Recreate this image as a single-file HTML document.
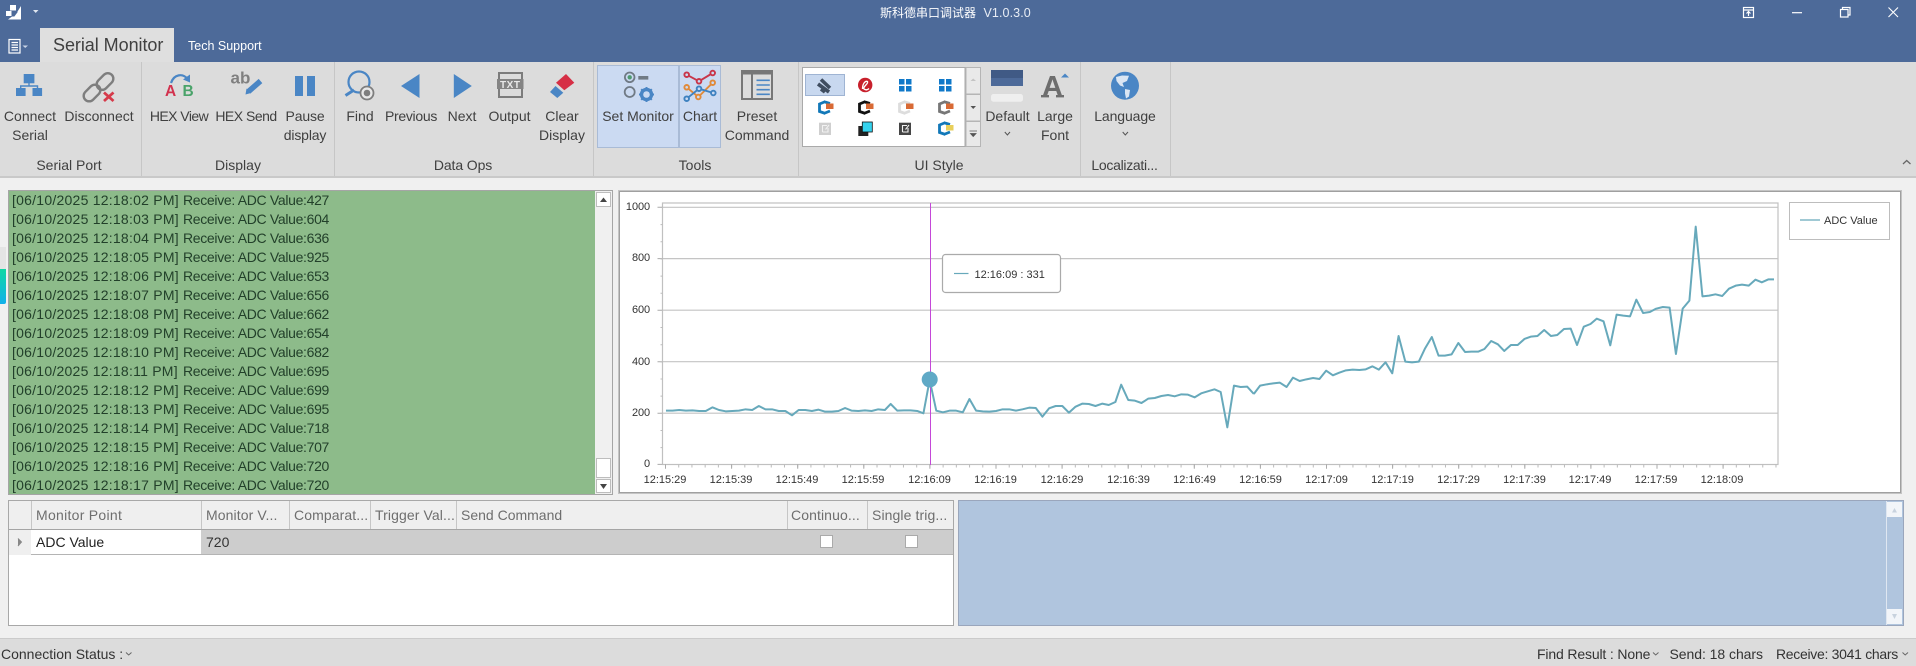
<!DOCTYPE html>
<html><head><meta charset="utf-8"><style>
html,body{margin:0;padding:0;width:1916px;height:666px;overflow:hidden;background:#f0f0f0}
body{position:relative;font-family:"Liberation Sans","Noto Sans CJK SC",sans-serif;font-size:14px;color:#404040}
div,span{position:absolute}
.c{transform:translateX(-50%);white-space:nowrap;line-height:18px;text-align:center}
.l{white-space:nowrap;line-height:18px}
.sb{background:#fff;border:1px solid #bdbdbd;box-sizing:border-box}
.h{top:502px;height:29px;line-height:27px;color:#6e6e6e;font-size:14px;white-space:nowrap;letter-spacing:.1px}
.v{top:501px;width:1px;height:28px;background:#c6c6c6}
.cb{top:535px;width:13px;height:13px;background:#fff;border:1px solid #aaa;box-sizing:border-box}
.y{right:1266px;font-size:11px;line-height:14px;color:#333;letter-spacing:-.1px}
.x{top:473px;font-size:11px;line-height:14px;color:#333;transform:translateX(-50%);white-space:nowrap}
</style></head><body>
<div style="left:0;top:0;width:1916px;height:62px;background:#4d6a99"></div>
<div style="left:40px;top:28px;width:134px;height:34px;background:#dfdfdf"></div>
<div class="l" style="left:53px;top:36px;font-size:18px;letter-spacing:-.05px;color:#404040">Serial Monitor</div>
<div class="l" style="left:188px;top:37px;font-size:12.5px;color:#fff">Tech Support</div>
<div class="l" style="left:880px;top:4px;font-size:12px;color:#fff">斯科德串口调试器</div>
<div class="l" style="left:983.5px;top:4px;font-size:12.5px;color:#e8edf5;letter-spacing:.1px">V1.0.3.0</div>

<div style="left:0;top:62px;width:1916px;height:114px;background:#dcdcdc;border-bottom:2px solid #c9c9c9"></div>
<div style="left:141px;top:62px;width:1px;height:114px;background:#c6c6c6"></div>
<div style="left:334px;top:62px;width:1px;height:114px;background:#c6c6c6"></div>
<div style="left:593px;top:62px;width:1px;height:114px;background:#c6c6c6"></div>
<div style="left:798px;top:62px;width:1px;height:114px;background:#c6c6c6"></div>
<div style="left:1080px;top:62px;width:1px;height:114px;background:#c6c6c6"></div>
<div style="left:1170px;top:62px;width:1px;height:114px;background:#c6c6c6"></div>

<div style="left:597px;top:65px;width:82px;height:83px;background:#cbdaf2;border:1px solid #a9bbd6;box-sizing:border-box"></div>
<div style="left:679px;top:65px;width:42px;height:83px;background:#cbdaf2;border:1px solid #a9bbd6;box-sizing:border-box"></div>

<div class="c" style="left:30px;top:107px">Connect</div><div class="c" style="left:30px;top:126px">Serial</div>
<div class="c" style="left:99px;top:107px">Disconnect</div>
<div class="c" style="left:179px;top:107px;letter-spacing:-.55px">HEX View</div>
<div class="c" style="left:246px;top:107px;letter-spacing:-.5px">HEX Send</div>
<div class="c" style="left:305px;top:107px;letter-spacing:-.15px">Pause</div><div class="c" style="left:305px;top:126px;letter-spacing:-.15px">display</div>
<div class="c" style="left:360px;top:107px">Find</div>
<div class="c" style="left:411px;top:107px;letter-spacing:-.3px">Previous</div>
<div class="c" style="left:462px;top:107px">Next</div>
<div class="c" style="left:509.5px;top:107px">Output</div>
<div class="c" style="left:562px;top:107px">Clear</div><div class="c" style="left:562px;top:126px">Display</div>
<div class="c" style="left:638px;top:107px">Set Monitor</div>
<div class="c" style="left:700px;top:107px">Chart</div>
<div class="c" style="left:757px;top:107px">Preset</div><div class="c" style="left:757px;top:126px">Command</div>
<div class="c" style="left:1007.5px;top:107px">Default</div>
<div class="c" style="left:1055px;top:107px">Large</div><div class="c" style="left:1055px;top:126px">Font</div>
<div class="c" style="left:1125px;top:107px;letter-spacing:-.1px">Language</div>

<div class="c" style="left:69px;top:156px">Serial Port</div>
<div class="c" style="left:238px;top:156px">Display</div>
<div class="c" style="left:463px;top:156px;letter-spacing:-.1px">Data Ops</div>
<div class="c" style="left:695px;top:156px">Tools</div>
<div class="c" style="left:939px;top:156px">UI Style</div>
<div class="c" style="left:1124.5px;top:156px;letter-spacing:-.3px">Localizati...</div>

<!-- left marker -->
<div style="left:0;top:247px;width:6px;height:22px;background:#e4e4e4"></div>
<div style="left:0;top:269px;width:6px;height:35px;background:linear-gradient(#10d8a4,#12b0ea);border-radius:0 0 2px 0"></div>

<!-- log -->
<div style="left:8px;top:190px;width:605px;height:305px;border:1px solid #a5a5a5;box-sizing:border-box;background:#f0f0f0"></div>
<div style="left:9px;top:191px;width:586px;height:303px;background:#8dbb8a"></div>
<div class="l" style="left:12px;top:190.5px;line-height:19px;color:#22402a;font-size:14px;letter-spacing:.24px">[06/10/2025 12:18:02 PM]<br>[06/10/2025 12:18:03 PM]<br>[06/10/2025 12:18:04 PM]<br>[06/10/2025 12:18:05 PM]<br>[06/10/2025 12:18:06 PM]<br>[06/10/2025 12:18:07 PM]<br>[06/10/2025 12:18:08 PM]<br>[06/10/2025 12:18:09 PM]<br>[06/10/2025 12:18:10 PM]<br>[06/10/2025 12:18:11 PM]<br>[06/10/2025 12:18:12 PM]<br>[06/10/2025 12:18:13 PM]<br>[06/10/2025 12:18:14 PM]<br>[06/10/2025 12:18:15 PM]<br>[06/10/2025 12:18:16 PM]<br>[06/10/2025 12:18:17 PM]</div>
<div class="l" style="left:183px;top:190.5px;line-height:19px;color:#22402a;font-size:14px;letter-spacing:-.32px">Receive: ADC Value:427<br>Receive: ADC Value:604<br>Receive: ADC Value:636<br>Receive: ADC Value:925<br>Receive: ADC Value:653<br>Receive: ADC Value:656<br>Receive: ADC Value:662<br>Receive: ADC Value:654<br>Receive: ADC Value:682<br>Receive: ADC Value:695<br>Receive: ADC Value:699<br>Receive: ADC Value:695<br>Receive: ADC Value:718<br>Receive: ADC Value:707<br>Receive: ADC Value:720<br>Receive: ADC Value:720</div>
<div class="sb" style="left:596px;top:192px;width:15px;height:15px"></div>
<div class="sb" style="left:596px;top:458px;width:15px;height:20px"></div>
<div class="sb" style="left:596px;top:479px;width:15px;height:14px"></div>

<!-- chart -->
<div style="left:618px;top:190px;width:1284px;height:304px;background:#fff;border:1px solid #c4c4c4;outline:1px solid #a0a0a0;outline-offset:-2px;box-sizing:border-box"></div>
<div class="y" style="top:200px">1000</div><div class="y" style="top:251px">800</div><div class="y" style="top:303px">600</div><div class="y" style="top:355px">400</div><div class="y" style="top:406px">200</div><div class="y" style="top:457px">0</div>
<div class="x" style="left:665px">12:15:29</div><div class="x" style="left:731px">12:15:39</div><div class="x" style="left:797px">12:15:49</div><div class="x" style="left:863px">12:15:59</div><div class="x" style="left:929.5px">12:16:09</div><div class="x" style="left:995.5px">12:16:19</div><div class="x" style="left:1062px">12:16:29</div><div class="x" style="left:1128.5px">12:16:39</div><div class="x" style="left:1194.5px">12:16:49</div><div class="x" style="left:1260.5px">12:16:59</div><div class="x" style="left:1326.5px">12:17:09</div><div class="x" style="left:1392.5px">12:17:19</div><div class="x" style="left:1458.5px">12:17:29</div><div class="x" style="left:1524.5px">12:17:39</div><div class="x" style="left:1590px">12:17:49</div><div class="x" style="left:1656px">12:17:59</div><div class="x" style="left:1722px">12:18:09</div>
<div style="left:1789px;top:202px;width:101px;height:38px;border:1px solid #bdbdbd;box-sizing:border-box"></div>
<div class="l" style="left:1824px;top:213.5px;font-size:11px;color:#333;line-height:15px">ADC Value</div>

<!-- table -->
<div style="left:8px;top:500px;width:946px;height:126px;background:#fff;border:1px solid #a8a8a8;box-sizing:border-box"></div>
<div style="left:9px;top:501px;width:944px;height:28px;background:#efefef;border-bottom:1px solid #a5a5a5"></div>
<div style="left:9px;top:530px;width:22px;height:25px;background:#efefef"></div>
<div style="left:201px;top:530px;width:752px;height:24px;background:#cdcdcd"></div>
<div style="left:31px;top:554px;width:922px;height:1px;background:#b4b4b4"></div>
<div class="v" style="left:31px"></div><div class="v" style="left:201px"></div><div class="v" style="left:289px"></div><div class="v" style="left:370px"></div><div class="v" style="left:456px"></div><div class="v" style="left:787px"></div><div class="v" style="left:867px"></div>
<div class="h" style="left:36px;letter-spacing:.28px">Monitor Point</div>
<div class="h" style="left:206px">Monitor V...</div>
<div class="h" style="left:294px">Comparat...</div>
<div class="h" style="left:375px">Trigger Val...</div>
<div class="h" style="left:461px;letter-spacing:0">Send Command</div>
<div class="h" style="left:791px">Continuo...</div>
<div class="h" style="left:872px">Single trig...</div>
<div class="l" style="left:36px;top:533px;font-size:14px;color:#222">ADC Value</div>
<div class="l" style="left:206px;top:533px;font-size:14px;color:#333">720</div>
<div class="cb" style="left:820px"></div><div class="cb" style="left:905px"></div>

<!-- blue panel -->
<div style="left:958px;top:500px;width:946px;height:126px;background:#b0c5de;border:1px solid #9aa6bc;box-sizing:border-box"></div>
<div style="left:1886px;top:501px;width:1px;height:124px;background:#dfe7f1"></div>
<div style="left:1887px;top:502px;width:15px;height:15px;background:#f2f5f9"></div>
<div style="left:1887px;top:609px;width:15px;height:15px;background:#f2f5f9"></div>

<!-- status -->
<div style="left:0;top:638px;width:1916px;height:28px;background:#dcdcdc;border-top:1px solid #cbcbcb;box-sizing:border-box"></div>
<div class="l" style="left:1px;top:645px;color:#333">Connection Status :</div>
<div class="l" style="left:1537px;top:645px;color:#333;letter-spacing:-.15px">Find Result : None</div>
<div class="l" style="left:1669.5px;top:645px;color:#333;letter-spacing:-.05px">Send: 18 chars</div>
<div class="l" style="left:1776px;top:645px;color:#333;letter-spacing:-.3px">Receive: 3041 chars</div>

<svg width="1916" height="666" viewBox="0 0 1916 666" style="position:absolute;left:0;top:0" font-family="Liberation Sans, sans-serif">
<!-- window controls -->
<g fill="none" stroke="#fff" stroke-width="1.2">
<rect x="1743.5" y="7.5" width="10" height="10"/><path d="M1743.5 10H1753.5M1748.5 16V11.5M1746.5 13.5L1748.5 11.5L1750.5 13.5"/>
<path d="M1792 12.7H1802"/>
<rect x="1840.5" y="9.5" width="7.5" height="7.5"/><path d="M1842.5 9.5V7.5H1850V15H1848"/>
<path d="M1888.5 7.5L1898 17M1898 7.5L1888.5 17" stroke-width="1.1"/>
</g>
<!-- app icon -->
<g fill="#fff"><rect x="10" y="5" width="6" height="5.5"/><rect x="6" y="11" width="5.5" height="5"/><path d="M21 6V19.5H8L12 16.5H17.5V11.5Z"/><path d="M18.5 11L19.3 18.2H13Z"/></g>
<path d="M33 10H38.5L35.7 13Z" fill="#dfe6f0"/>
<g fill="none" stroke="#fff" stroke-width="1.2"><rect x="9" y="39.5" width="11" height="13.5"/><path d="M11.5 42.5H18M11.5 45H18M11.5 47.5H18M11.5 50H18"/></g>
<path d="M22.5 45.5H28L25.2 48Z" fill="#c9d4e6"/>
<path d="M1903 164L1906.7 160.5L1910.5 164" fill="none" stroke="#666" stroke-width="1.3"/>

<!-- connect -->
<g fill="#4a86c5"><rect x="23.7" y="74" width="10.7" height="9.3"/><rect x="16" y="88" width="9.6" height="8"/><rect x="32.5" y="88" width="9.6" height="8"/></g>
<path d="M29 83V86H20.7V88M29 86H37.5V88" stroke="#4a86c5" stroke-width="1.4" fill="none"/>
<!-- disconnect -->
<g fill="none" stroke="#7e7e7e" stroke-width="2.4">
<rect x="95.5" y="76" width="19" height="11" rx="5.5" transform="rotate(-45 105 81.5)"/>
<rect x="82.5" y="87.5" width="19" height="11" rx="5.5" transform="rotate(-45 92 93)"/></g>
<path d="M104 92.5L113.5 101M113.5 92.5L104 101" stroke="#d63a4a" stroke-width="2.8" fill="none"/>
<!-- hex view -->
<text x="165" y="96" font-size="15.5" font-weight="700" fill="#d2324e">A</text>
<text x="182.5" y="96" font-size="15.5" font-weight="700" fill="#4aa36a">B</text>
<path d="M171 83C174 74 183 73 187.5 79" fill="none" stroke="#4a86c5" stroke-width="2.2"/>
<path d="M183 79.5L190 74.5L190 82.5Z" fill="#4a86c5"/>
<!-- hex send -->
<text x="230.5" y="83.5" font-size="17" font-weight="700" fill="#808080">ab</text>
<path d="M248.5 91.5L260.5 81" stroke="#4a86c5" stroke-width="5.5" fill="none"/><path d="M245.5 94.5L246.5 88.5L251 93Z" fill="#4a86c5"/>
<!-- pause -->
<rect x="295" y="76" width="8" height="20" fill="#4a86c5"/><rect x="307" y="76" width="8" height="20" fill="#4a86c5"/>
<!-- find -->
<circle cx="359" cy="82" r="10.5" fill="none" stroke="#4a86c5" stroke-width="2.2"/>
<path d="M354 90L345.5 95.5" stroke="#4a86c5" stroke-width="3"/>
<circle cx="367" cy="93" r="6.5" fill="#e8e8e8" stroke="#7e7e7e" stroke-width="1.8"/><circle cx="367" cy="93" r="3.3" fill="#7e7e7e"/>
<!-- prev/next -->
<path d="M401 86L419.5 74V98Z" fill="#4a86c5"/><path d="M453.8 74L471.8 86L453.8 98Z" fill="#4a86c5"/>
<!-- output -->
<rect x="499" y="73" width="23" height="24" fill="none" stroke="#7c7c7c" stroke-width="2"/>
<rect x="497" y="79" width="26.5" height="10" fill="#848484"/>
<text x="510.3" y="88" font-size="10" font-weight="700" fill="#e8e8e8" text-anchor="middle" letter-spacing=".6">TXT</text>
<!-- eraser -->
<path d="M556 82.7L566 74L574.3 82.7L564.3 90.3Z" fill="#d62f45"/>
<path d="M550 92L555.5 86L563.3 92.7L557.3 98Z" fill="#4a86c5"/>
<!-- set monitor -->
<circle cx="629.7" cy="77.3" r="4.8" fill="none" stroke="#707a85" stroke-width="1.8"/><circle cx="629.7" cy="77.3" r="2.2" fill="#4f9a70"/>
<rect x="638.3" y="76" width="10" height="3.6" fill="#707a85"/>
<circle cx="629.7" cy="92" r="5" fill="none" stroke="#707a85" stroke-width="1.8"/>
<path d="M646.5 87V102M639 94.5H654M641.2 89.2L651.8 99.8M651.8 89.2L641.2 99.8" stroke="#4a86c5" stroke-width="1.9"/>
<circle cx="646.5" cy="94.5" r="5" fill="#cbdaf2" stroke="#4a86c5" stroke-width="3.4"/>
<!-- chart icon -->
<g fill="none" stroke-width="1.9">
<path d="M686.7 74.7L699 81.3L712.7 73" stroke="#c8354a"/>
<path d="M686.7 87.3L698.3 97L712.7 82.7" stroke="#e08a3a"/>
<path d="M686.7 98.7L699 88.7L713.3 93" stroke="#3f82c0"/>
<g fill="#cbdaf2"><circle cx="686.7" cy="74.7" r="2.3" stroke="#c8354a"/><circle cx="699" cy="81.3" r="2.3" stroke="#c8354a"/><circle cx="712.7" cy="73" r="2.3" stroke="#c8354a"/>
<circle cx="686.7" cy="87.3" r="2.3" stroke="#e08a3a"/><circle cx="698.3" cy="97" r="2.3" stroke="#e08a3a"/><circle cx="712.7" cy="82.7" r="2.3" stroke="#e08a3a"/>
<circle cx="686.7" cy="98.7" r="2.3" stroke="#3f82c0"/><circle cx="699" cy="88.7" r="2.3" stroke="#3f82c0"/><circle cx="713.3" cy="93" r="2.3" stroke="#3f82c0"/></g></g>
<!-- preset -->
<rect x="742" y="71" width="30" height="28" fill="none" stroke="#777" stroke-width="2"/>
<rect x="741.5" y="70" width="31" height="4.5" fill="#777"/>
<rect x="751" y="74" width="2" height="25" fill="#777"/>
<path d="M756.5 80.3H769.8M756.5 85H769.8M756.5 89.7H769.8M756.5 94.3H769.8" stroke="#4a86c5" stroke-width="1.6"/>

<!-- gallery -->
<rect x="802.5" y="67.5" width="162.5" height="79" fill="#fff" stroke="#aaa"/>
<g fill="#e9e9e9" stroke="#b5b5b5"><rect x="966" y="67.5" width="14.5" height="26.5"/><rect x="966" y="94.5" width="14.5" height="26.5"/><rect x="966" y="121.5" width="14.5" height="25"/></g>
<path d="M970.5 81L973.2 78.5L976 81Z" fill="#c4c4c4"/><path d="M970.5 106H976L973.2 109Z" fill="#555"/><path d="M969.5 131H977M970.5 133.5H976L973.2 136.5Z" stroke="#555" stroke-width=".8" fill="#555"/>
<rect x="805.5" y="74.5" width="39" height="21" fill="#c8d8ef" stroke="#9fb4d3"/>
<path d="M821 79.5L830 88M818 84L829 92M821 89L825 92" stroke="#3f4d60" stroke-width="3.6"/>
<circle cx="865.2" cy="85" r="7.2" fill="#c8202c"/><path d="M862.5 89C862.5 84 865 80.5 867.5 81.5C868.5 84 864.5 85 863.5 88.5C865.5 90.5 867.5 90 869 88.5" fill="none" stroke="#fff" stroke-width="1.3"/>
<path d="M899 79H904.5V84.5H899ZM906 79H911.5V84.5H906ZM899 86H904.5V91.5H899ZM906 86H911.5V91.5H906Z" fill="#0f78c9"/>
<path d="M939 79H944.5V84.5H939ZM946 79H951.5V84.5H946ZM939 86H944.5V91.5H939ZM946 86H951.5V91.5H946Z" fill="#0f78c9"/>
<g fill="none" stroke-width="2.8">
<path d="M825.5 101.5L819.5 104V111.5L825.5 113.5M825 102L830 103.5M825 113L830 111" stroke="#1278b8"/>
<path d="M865.5 101.5L859.5 104V111.5L865.5 113.5M865 102L870 103.5M865 113L870 111" stroke="#111"/>
<path d="M905.5 101.5L899.5 104V111.5L905.5 113.5M905 102L910 103.5M905 113L910 111" stroke="#ddd"/>
<path d="M945.5 101.5L939.5 104V111.5L945.5 113.5M945 102L950 103.5M945 113L950 111" stroke="#777"/>
</g>
<g fill="#d86a35"><rect x="826" y="103.5" width="7.5" height="5.5"/><rect x="866" y="103.5" width="7.5" height="5.5"/><rect x="906" y="103.5" width="7.5" height="5.5"/><rect x="946" y="103.5" width="7.5" height="5.5"/></g>
<rect x="819" y="122.7" width="12" height="12.3" fill="#cfcfcf"/><path d="M822.5 132V125.5H827M822.5 132H828V128M829 125L825.5 129.5" fill="none" stroke="#f2f2f2" stroke-width="1.1"/>
<rect x="858.3" y="126" width="10" height="10" fill="#222"/><rect x="862.3" y="122" width="10" height="10" fill="#35d3ee" stroke="#111" stroke-width=".8"/>
<rect x="899" y="122.7" width="12" height="12.3" fill="#454545"/><path d="M902.5 132V125.5H907M902.5 132H908V128M909 125L905.5 129.5" fill="none" stroke="#f2f2f2" stroke-width="1.1"/>
<path d="M945.5 122.5L939.5 125V132.5L945.5 134.5M945 123L950 124.5M945 134L950 132" fill="none" stroke="#1278b8" stroke-width="2.8"/><rect x="946" y="125" width="7.5" height="5.5" fill="#e8cf5a"/>

<!-- default -->
<rect x="991" y="70" width="32" height="16" fill="#4d6a99"/><rect x="991" y="70" width="32" height="8" fill="#405a85"/>
<rect x="991" y="94" width="32" height="7.7" rx="2.5" fill="#efefef"/>
<path d="M1004.8 132L1007.4 135L1010 132" fill="none" stroke="#555" stroke-width="1"/>
<!-- large font -->
<text x="1052.5" y="96" font-size="29" font-weight="700" fill="#6e6e6e" text-anchor="middle">A</text>
<rect x="1041" y="95" width="8" height="2.4" fill="#6e6e6e"/><rect x="1056" y="95" width="8" height="2.4" fill="#6e6e6e"/>
<path d="M1061 77.5L1065 73.5L1069 77.5Z" fill="#4a86c5"/>
<!-- globe -->
<circle cx="1125" cy="85.7" r="14" fill="#4a86c5"/>
<path d="M1116 77L1122 75.5L1129 75.7L1127 81L1122.5 83L1124 87L1120 85.5L1116.5 81ZM1125 89L1130 90L1129 96.5L1126 98.5L1125 93.5Z" fill="#dbe6f3"/>
<path d="M1122.7 132L1125.3 135L1128 132" fill="none" stroke="#555" stroke-width="1"/>

<!-- log scrollbar arrows -->
<path d="M600 202L603.5 197.5L607 202Z" fill="#444"/><path d="M600 484L603.5 489L607 484Z" fill="#444"/>
<path d="M1892 512.5L1894.5 508L1897 512.5Z" fill="#c8d2de"/><path d="M1892 614L1894.5 619L1897 614Z" fill="#c8d2de"/>

<!-- chart plot -->
<rect x="662.5" y="203" width="1115.5" height="261.5" fill="none" stroke="#c0c0c0" stroke-width="1.2"/>
<path d="M663 207.3H1778M663 258.6H1778M663 310.2H1778M663 361.7H1778M663 413.2H1778" stroke="#c4c4c4" stroke-width="1.2"/>
<path d="M657.5 207.3H662.5M657.5 258.6H662.5M657.5 310.2H662.5M657.5 361.7H662.5M657.5 413.2H662.5M657.5 464.4H662.5" stroke="#aaa"/>
<line x1="661.5" y1="207" x2="661.5" y2="465" stroke="#bbb" stroke-width="2" stroke-dasharray="1 16.15"/>
<line x1="665" y1="466" x2="1778" y2="466" stroke="#bbb" stroke-width="3" stroke-dasharray="1 12.22"/>
<line x1="665" y1="466.5" x2="1778" y2="466.5" stroke="#aaa" stroke-width="4.5" stroke-dasharray="1 65.1"/>
<g fill="none" stroke="#67a9bb" stroke-width="2" stroke-linejoin="round">
<polyline vector-effect="non-scaling-stroke" transform="translate(610,180) scale(.41459,.33333)" points="135,692 151,692 167,690 183,692 199,691 215,693 231,693 247,682 263,690 279,694 295,693 311,692 327,688 343,690 359,678 375,688 391,688 407,693 423,693 439,706 455,690 471,690 487,693 503,689 519,695 535,695 551,693 567,684 583,692 599,693 615,691 631,693 647,688 663,690 677,672 693,692 709,691 725,691 741,693 756,700 771,600 787,692 803,697 819,692 835,692 851,697 867,657 883,692 899,694 915,695 931,693 947,688 963,688 979,692 995,688 1011,683 1027,684 1043,710 1059,685 1075,678 1091,678 1107,698 1123,680 1139,671 1155,672 1171,678 1187,671 1203,675 1219,666 1233,614 1250,660 1266,662 1282,669 1298,656 1314,654 1330,648 1346,645 1362,649 1378,643 1394,644 1410,652 1426,640 1442,634 1458,628 1473,636 1489,742 1505,617 1521,621 1537,620 1553,642"/>
<polyline vector-effect="non-scaling-stroke" transform="translate(1250,200) scale(.42088,.33333)" points="9,582 24,557 40,553 55,550 71,548 87,561 102,533 118,543 134,538 150,534 165,537 181,512 197,526 212,518 228,511 244,509 260,510 275,508 291,499 306,509 322,487 338,520 353,408 369,485 385,487 401,485 416,445 432,411 448,467 463,467 479,463 495,429 511,456 526,455 542,455 557,447 573,423 589,433 604,453 620,435 636,435 652,417 667,410 683,408 699,390 715,408 730,405 746,387 762,386 777,435 793,380 809,372 824,356 840,364 856,436 871,344 887,347 903,349 918,299 934,339 950,336 965,326 981,321 997,323 1012,462 1028,326 1044,302 1059,80 1075,289 1091,287 1106,283 1122,288 1138,266 1154,257 1169,254 1185,257 1201,239 1216,247 1232,238 1245,238"/>
</g>
<rect x="930" y="203" width="1" height="262" fill="#c448d8"/>
<circle cx="929.7" cy="379.5" r="8" fill="#5fa9c6"/>
<rect x="942.5" y="254.5" width="118" height="38" rx="3" fill="#fff" stroke="#aaa" stroke-width="1.2"/>
<line x1="954" y1="273.5" x2="968.5" y2="273.5" stroke="#67a9bb" stroke-width="1.2"/>
<text x="974.5" y="278" font-size="11" fill="#333">12:16:09 : 331</text>
<line x1="1800" y1="220" x2="1820" y2="220" stroke="#67a9bb" stroke-width="1.2"/>

<!-- row arrow, status chevrons -->
<path d="M18 538.5L21.5 542L18 546" fill="#888" stroke="#888"/>
<g fill="none" stroke="#666" stroke-width="1"><path d="M126 652.5L128.7 655L131.5 652.5"/><path d="M1653 652.5L1655.7 655L1658.5 652.5"/><path d="M1902.5 652.5L1905.2 655L1908 652.5"/></g>
</svg>
</body></html>
